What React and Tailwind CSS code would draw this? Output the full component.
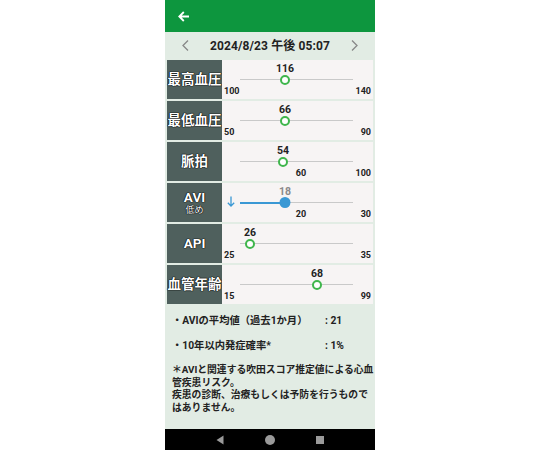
import React from "react";

const rows = [
  { label: "最高血圧", value: "116", thumb: 63, min: "100", max: "140" },
  { label: "最低血圧", value: "66", thumb: 63, min: "50", max: "90" },
  { label: "脈拍", value: "54", thumb: 61, mid: "60", max: "100" },
  { label: "AVI", sub: "低め", value: "18", thumb: 63, mid: "20", max: "30", active: true },
  { label: "API", value: "26", thumb: 28, min: "25", max: "35" },
  { label: "血管年齢", value: "68", thumb: 95, min: "15", max: "99" },
];

const outline = "[text-shadow:0_0_1px_#000,0_0_1px_#000,0_0_1px_#000]";

const Row = ({ row }) => (
  <div className="flex h-[39px]">
    <div
      className={`w-[55px] bg-[#4f605d] flex flex-col items-center justify-center text-white font-bold ${outline}`}
    >
      <span className="text-[13.5px] leading-[15px]">{row.label}</span>
      {row.sub && <span className="text-[9px] leading-[11px] font-normal">{row.sub}</span>}
    </div>
    <div className="flex-1 bg-[#f7f4f4] relative">
      {row.active && (
        <svg className="absolute left-[5px] top-[13px]" width="8" height="11" viewBox="0 0 8 11" fill="none" stroke="#3a98d4" strokeWidth="1.3">
          <path d="M4 0.5V10M0.8 6.8L4 10L7.2 6.8" />
        </svg>
      )}
      <span
        className={`absolute top-[3px] text-[10.5px] leading-[12px] font-bold -translate-x-1/2 ${
          row.active ? "text-[#8a8a8a]" : "text-[#222]"
        }`}
        style={{ left: row.thumb }}
      >
        {row.value}
      </span>
      <div className="absolute left-[18px] w-[113px] top-[19px] h-px bg-[#c9c9c9]" />
      {row.active && (
        <div
          className="absolute left-[18px] top-[18.5px] h-[2px] bg-[#3a98d4]"
          style={{ width: row.thumb - 18 }}
        />
      )}
      <div
        className={`absolute top-[14.5px] -translate-x-1/2 rounded-full ${
          row.active
            ? "w-[11px] h-[11px] bg-[#3a98d4] -mt-[0.5px]"
            : "w-[10px] h-[10px] border-2 border-[#3fb64c] bg-white"
        }`}
        style={{ left: row.thumb }}
      />
      {row.min && (
        <span className="absolute left-[2px] top-[26px] text-[9px] leading-[10px] font-bold text-[#222]">
          {row.min}
        </span>
      )}
      {row.mid && (
        <span
          className="absolute top-[26px] -translate-x-1/2 text-[9px] leading-[10px] font-bold text-[#222]"
          style={{ left: 79 }}
        >
          {row.mid}
        </span>
      )}
      <span className="absolute right-[2px] top-[26px] text-[9px] leading-[10px] font-bold text-[#222]">
        {row.max}
      </span>
    </div>
  </div>
);

export default function App() {
  return (
    <div
      className="w-[540px] h-[450px] bg-white flex justify-center"
      style={{ fontFamily: 'Roboto, "Noto Sans CJK JP", sans-serif' }}
    >
      <div className="w-[210px] h-full bg-[#e2ece4] flex flex-col">
        <div className="h-[32px] bg-[#0d963e] flex items-center px-[13px]">
          <svg width="12" height="11" viewBox="0 0 12 11" fill="none" stroke="white" strokeWidth="1.8">
            <path d="M11 5.5H1.5M5.8 1L1.3 5.5L5.8 10" />
          </svg>
        </div>
        <div className="h-[27px] flex items-center justify-between px-[17px]">
          <svg width="7" height="11" viewBox="0 0 7 11" fill="none" stroke="#888" strokeWidth="1.3">
            <path d="M6 0.5L1 5.5L6 10.5" />
          </svg>
          <span className="text-[12px] font-bold text-[#222] tracking-[0.1px]">2024/8/23 午後 05:07</span>
          <svg width="7" height="11" viewBox="0 0 7 11" fill="none" stroke="#888" strokeWidth="1.3">
            <path d="M1 0.5L6 5.5L1 10.5" />
          </svg>
        </div>
        <div className="mt-[1px] px-[2px] flex flex-col gap-[2px]">
          {rows.map((r) => (
            <Row key={r.label} row={r} />
          ))}
        </div>
        <div className="flex-1 px-[7px] pt-[10px] text-[10.3px] font-bold text-[#222]">
          <div className="flex leading-[13px]">
            <span className="w-[153px]">・AVIの平均値（過去1か月）</span>
            <span>: 21</span>
          </div>
          <div className="flex leading-[13px] mt-[12px]">
            <span className="w-[153px]">・10年以内発症確率*</span>
            <span>: 1%</span>
          </div>
          <p className="mt-[12px] text-[9.8px] leading-[12.5px] whitespace-nowrap">
            ＊AVIと関連する吹田スコア推定値による心血
            <br />
            管疾患リスク。
            <br />
            疾患の診断、治療もしくは予防を行うもので
            <br />
            はありません。
          </p>
        </div>
        <div className="h-[21px] bg-black flex items-center justify-center gap-[41px]">
          <svg width="8" height="10" viewBox="0 0 8 10">
            <path d="M7.5 0.5V9.5L0.5 5Z" fill="#9a9a9a" />
          </svg>
          <div className="w-[10px] h-[10px] rounded-full bg-[#9a9a9a]" />
          <div className="w-[8px] h-[8px] bg-[#9a9a9a]" />
        </div>
      </div>
    </div>
  );
}
